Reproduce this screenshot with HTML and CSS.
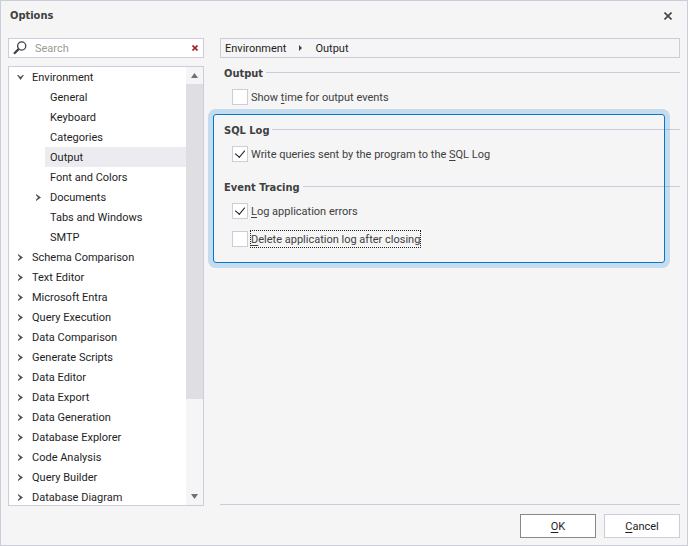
FILE: index.html
```html
<!DOCTYPE html>
<html lang="en">
<head>
<meta charset="utf-8">
<title>Options</title>
<link rel="stylesheet" href="styles.css">
</head>
<body>
<svg class="defs" aria-hidden="true">
  <symbol id="chevron" viewBox="0 0 7 7"><path d="M1 0 6 3.5 1 7V5.8L3 3.5 1 1.2Z" fill="currentColor"/></symbol>
</svg>
<main class="dialog">
  <header class="titlebar">
    <h1>Options</h1>
    <button class="icon-button" type="button" aria-label="Close">
      <svg width="8" height="8" viewBox="0 0 8 8"><path d="M.5 .5 7.5 7.5M7.5 .5 .5 7.5" stroke="#444" stroke-width="1.6"/></svg>
    </button>
  </header>
  <div class="body">
    <aside class="sidebar">
      <div class="search">
        <svg width="14" height="14" viewBox="0 0 14 14" fill="none" stroke="#404040"><circle cx="8.7" cy="5" r="4.1" stroke-width="1.3"/><path d="M5.6 8.1 1 12.7" stroke-width="2.2"/></svg>
        <input type="text" placeholder="Search" aria-label="Search">
        <button class="icon-button" type="button" aria-label="Clear search">
          <svg width="6" height="6" viewBox="0 0 6 6"><path d="M.5 .5 5.5 5.5M5.5 .5 .5 5.5" stroke="#a3281e" stroke-width="1.7"/></svg>
        </button>
      </div>
      <div class="tree-frame">
        <ul class="tree">
          <li><div class="row"><button class="expander open" type="button" aria-label="Collapse Environment"><svg><use href="#chevron"/></svg></button><span>Environment</span></div>
            <ul>
              <li><div class="row"><span>General</span></div></li>
              <li><div class="row"><span>Keyboard</span></div></li>
              <li><div class="row"><span>Categories</span></div></li>
              <li><div class="row selected"><span>Output</span></div></li>
              <li><div class="row"><span>Font and Colors</span></div></li>
              <li><div class="row"><button class="expander" type="button" aria-label="Expand Documents"><svg><use href="#chevron"/></svg></button><span>Documents</span></div></li>
              <li><div class="row"><span>Tabs and Windows</span></div></li>
              <li><div class="row"><span>SMTP</span></div></li>
            </ul>
          </li>
          <li><div class="row"><button class="expander" type="button" aria-label="Expand Schema Comparison"><svg><use href="#chevron"/></svg></button><span>Schema Comparison</span></div></li>
          <li><div class="row"><button class="expander" type="button" aria-label="Expand Text Editor"><svg><use href="#chevron"/></svg></button><span>Text Editor</span></div></li>
          <li><div class="row"><button class="expander" type="button" aria-label="Expand Microsoft Entra"><svg><use href="#chevron"/></svg></button><span>Microsoft Entra</span></div></li>
          <li><div class="row"><button class="expander" type="button" aria-label="Expand Query Execution"><svg><use href="#chevron"/></svg></button><span>Query Execution</span></div></li>
          <li><div class="row"><button class="expander" type="button" aria-label="Expand Data Comparison"><svg><use href="#chevron"/></svg></button><span>Data Comparison</span></div></li>
          <li><div class="row"><button class="expander" type="button" aria-label="Expand Generate Scripts"><svg><use href="#chevron"/></svg></button><span>Generate Scripts</span></div></li>
          <li><div class="row"><button class="expander" type="button" aria-label="Expand Data Editor"><svg><use href="#chevron"/></svg></button><span>Data Editor</span></div></li>
          <li><div class="row"><button class="expander" type="button" aria-label="Expand Data Export"><svg><use href="#chevron"/></svg></button><span>Data Export</span></div></li>
          <li><div class="row"><button class="expander" type="button" aria-label="Expand Data Generation"><svg><use href="#chevron"/></svg></button><span>Data Generation</span></div></li>
          <li><div class="row"><button class="expander" type="button" aria-label="Expand Database Explorer"><svg><use href="#chevron"/></svg></button><span>Database Explorer</span></div></li>
          <li><div class="row"><button class="expander" type="button" aria-label="Expand Code Analysis"><svg><use href="#chevron"/></svg></button><span>Code Analysis</span></div></li>
          <li><div class="row"><button class="expander" type="button" aria-label="Expand Query Builder"><svg><use href="#chevron"/></svg></button><span>Query Builder</span></div></li>
          <li><div class="row"><button class="expander" type="button" aria-label="Expand Database Diagram"><svg><use href="#chevron"/></svg></button><span>Database Diagram</span></div></li>
        </ul>
        <div class="scrollbar">
          <button type="button" aria-label="Scroll up"><svg width="7" height="5" viewBox="0 0 7 5"><path d="M0 5 3.5 0 7 5Z" fill="#707070"/></svg></button>
          <div class="track"><div class="thumb"></div></div>
          <button type="button" aria-label="Scroll down"><svg width="7" height="5" viewBox="0 0 7 5"><path d="M0 0 3.5 5 7 0Z" fill="#707070"/></svg></button>
        </div>
      </div>
    </aside>
    <section class="page">
      <nav class="breadcrumb" aria-label="Location">
        <span>Environment</span>
        <svg width="3" height="6" viewBox="0 0 3 6"><path d="M0 0 3 3 0 6Z" fill="#404040"/></svg>
        <span>Output</span>
      </nav>
      <div class="group">
        <h2>Output</h2>
        <div class="option"><input type="checkbox" id="time"><label for="time">Show <u>t</u>ime for output events</label></div>
      </div>
      <div class="highlighted">
        <div class="group">
          <h2>SQL Log</h2>
          <div class="option"><input type="checkbox" id="sql" checked><label for="sql">Write queries sent by the program to the <u>S</u>QL Log</label></div>
        </div>
        <div class="group">
          <h2>Event Tracing</h2>
          <div class="option"><input type="checkbox" id="errors" checked><label for="errors"><u>L</u>og application errors</label></div>
          <div class="option"><input type="checkbox" id="delete"><label class="focused" for="delete"><u>D</u>elete application log after closing</label></div>
        </div>
      </div>
    </section>
  </div>
  <footer class="actions">
    <button class="default" type="button"><u>O</u>K</button>
    <button type="button"><u>C</u>ancel</button>
  </footer>
</main>
</body>
</html>
```

FILE: styles.css
```css
* {
  box-sizing: border-box;
}

body {
  margin: 0;
  color: #1e1e1e;
  background: #f5f5f5;
  font: 11px/16px Roboto, "DejaVu Sans Condensed", sans-serif;
}

button,
input {
  margin: 0;
  padding: 0;
  color: inherit;
  font: inherit;
}

u {
  text-underline-offset: 2px;
  text-decoration-thickness: 1px;
  text-decoration-skip-ink: none;
}

svg {
  display: block;
  flex: none;
}

.defs {
  position: absolute;
  width: 0;
  height: 0;
}

.dialog {
  display: flex;
  flex-direction: column;
  height: 100vh;
  padding: 0 7px 7px;
  border: 1px solid #ccccdd;
}

.titlebar {
  display: flex;
  align-items: center;
  justify-content: space-between;
  height: 29px;
  margin-bottom: 8px;
  padding: 0 3px 0 2px;
}

h1,
h2 {
  margin: 0;
  color: #404040;
  font-family: "DejaVu Sans Condensed", "DejaVu Sans", sans-serif;
  font-size: 11px;
  font-weight: bold;
}

.icon-button {
  display: grid;
  place-items: center;
  width: 18px;
  height: 18px;
  border: 0;
  background: none;
}

.body {
  display: flex;
  flex: 1;
  gap: 16px;
  min-height: 0;
}

.sidebar {
  display: flex;
  flex: none;
  flex-direction: column;
  gap: 8px;
  width: 196px;
}

.search {
  display: flex;
  align-items: center;
  height: 20px;
  padding-left: 4px;
  border: 1px solid #ccccdd;
  background: #fff;
}

.search input {
  flex: 1;
  min-width: 0;
  margin-left: 8px;
  padding-top: 2px;
  border: 0;
  outline: 0;
  background: none;
}

.search input::placeholder {
  color: #999;
  opacity: 1;
}

.search .icon-button {
  width: 16px;
}

.tree-frame {
  display: flex;
  flex: 1;
  min-height: 0;
  border: 1px solid #ccccdd;
  background: #fff;
}

.tree {
  flex: 1;
  overflow: hidden;
}

.tree,
.tree ul {
  margin: 0;
  padding: 0;
  list-style: none;
}

.tree ul {
  padding-left: 18px;
}

.row {
  display: flex;
  align-items: center;
  height: 20px;
  padding-left: 5px;
}

.row > span {
  flex: 1;
  padding: 2px 0 0 5px;
  line-height: 18px;
}

.row > span:first-child {
  margin-left: 13px;
}

.selected > span {
  background: #ececf0;
}

.expander {
  display: grid;
  place-items: center;
  width: 13px;
  height: 13px;
  border: 0;
  color: #505050;
  background: none;
}

.expander svg {
  width: 7px;
  height: 7px;
}

.expander.open svg {
  transform: rotate(90deg);
}

.scrollbar {
  display: flex;
  flex-direction: column;
  width: 17px;
  background: #f5f5f5;
}

.scrollbar button {
  display: grid;
  flex: none;
  place-items: center;
  height: 17px;
  border: 0;
  background: none;
}

.track {
  flex: 1;
}

.thumb {
  height: 78%;
  background: #dedee3;
}

.page {
  flex: 1;
  border-bottom: 1px solid #ccccdd;
  margin-bottom: 1px;
}

.breadcrumb {
  display: flex;
  align-items: center;
  gap: 13px;
  height: 20px;
  margin-bottom: 5px;
  padding-left: 4px;
  border: 1px solid #ccccdd;
}

.breadcrumb span {
  padding-top: 2px;
}

.group {
  margin-bottom: 9px;
}

.group h2 {
  display: flex;
  align-items: center;
  gap: 3px;
  height: 20px;
  padding: 2px 0 0 4px;
}

.group h2::after {
  flex: 1;
  height: 1px;
  margin-bottom: 4px;
  background: #ccccdd;
  content: "";
}

.option {
  display: flex;
  align-items: center;
  height: 28px;
  padding-left: 12px;
  color: #404040;
}

.option input {
  width: 16px;
  height: 16px;
  border: 1px solid #ccccdd;
  background: #fff;
  appearance: none;
}

.option input:checked {
  display: grid;
  place-items: center;
}

.option input:checked::before {
  width: 5px;
  height: 8px;
  margin-bottom: 3px;
  border: solid #222;
  border-width: 0 1px 1px 0;
  transform: rotate(40deg);
  content: "";
}

.option label {
  margin-left: 2px;
  padding-top: 2px;
  border: 1px dotted transparent;
  line-height: 14px;
}

.option .focused {
  border-color: #222;
}

.highlighted {
  position: relative;
}

.highlighted::after {
  position: absolute;
  inset: -6px 15px -10px -7px;
  border: 1px solid #007acc;
  border-radius: 3px;
  box-shadow: 0 0 0 5px rgba(0, 122, 204, 0.2);
  pointer-events: none;
  content: "";
}

.actions {
  display: flex;
  justify-content: flex-end;
  gap: 8px;
  margin-top: 8px;
}

.actions button {
  width: 76px;
  height: 24px;
  padding-top: 2px;
  border: 1px solid #ccccdd;
  background: #fff;
}

.actions .default {
  border-color: #888;
}
```
